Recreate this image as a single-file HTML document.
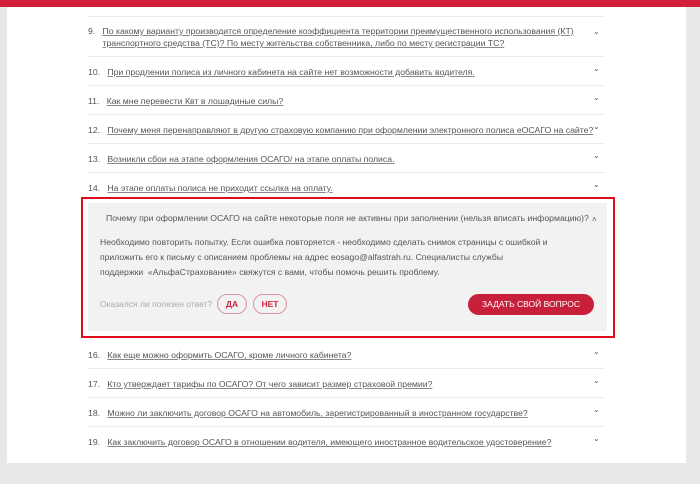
<!DOCTYPE html><html><head><meta charset="utf-8"><style>
body{margin:0;width:700px;height:484px;background:#e8e8e8;font-family:"Liberation Sans","DejaVu Sans",sans-serif;position:relative;overflow:hidden}
.bar{position:absolute;left:0;top:0;width:700px;height:7px;background:#d31e3a}
.white{position:absolute;left:7px;top:7px;width:679px;height:456px;background:#fff}
.ln{position:absolute;left:88px;width:517px;height:1px;background:#ececec}
.q{position:absolute;left:88px;font-size:8.7px;color:#555;line-height:12px;width:500px;white-space:nowrap}
.q u{color:#555;text-decoration-color:#888}
.ch{position:absolute;left:593px;font-size:8px;color:#555}
.box{position:absolute;left:81px;top:197px;width:530px;height:137px;border:2px solid #e10d1a}
.in{position:absolute;left:5px;top:4px;width:519px;height:128px;background:#f2f2f2}
.btn{position:absolute;border:1px solid #d9969e;border-radius:12px;color:#c8283f;font-size:8.5px;font-weight:bold;text-align:center;line-height:18px}
</style></head><body>
<div class="bar"></div><div class="white"></div>
<div class="ln" style="top:16px"></div>
<div class="q" style="top:25px">9.&nbsp;&nbsp; <u>По какому варианту производится определение коэффициента территории преимущественного использования (КТ)</u><br>&nbsp;&nbsp;&nbsp;&nbsp;&nbsp;&nbsp;<u>транспортного средства (ТС)? По месту жительства собственника, либо по месту регистрации ТС?</u></div><div class="ch" style="top:27px">⌄</div>
<div class="ln" style="top:56px"></div>
<div class="q" style="top:66px">10.&nbsp;&nbsp; <u>При продлении полиса из личного кабинета на сайте нет возможности добавить водителя.</u></div><div class="ch" style="top:64px">⌄</div>
<div class="ln" style="top:85px"></div>
<div class="q" style="top:95px">11.&nbsp;&nbsp; <u>Как мне перевести Квт в лошадиные силы?</u></div><div class="ch" style="top:93px">⌄</div>
<div class="ln" style="top:114px"></div>
<div class="q" style="top:124px">12.&nbsp;&nbsp; <u>Почему меня перенаправляют в другую страховую компанию при оформлении электронного полиса еОСАГО на сайте?</u></div><div class="ch" style="top:122px">⌄</div>
<div class="ln" style="top:143px"></div>
<div class="q" style="top:153px">13.&nbsp;&nbsp; <u>Возникли сбои на этапе оформления ОСАГО/ на этапе оплаты полиса.</u></div><div class="ch" style="top:151px">⌄</div>
<div class="ln" style="top:172px"></div>
<div class="q" style="top:182px">14.&nbsp;&nbsp; <u>На этапе оплаты полиса не приходит ссылка на оплату.</u></div><div class="ch" style="top:180px">⌄</div>
<div class="box"><div class="in">
<div style="position:absolute;left:18px;top:10px;font-size:8.7px;color:#555;white-space:nowrap">Почему при оформлении ОСАГО на сайте некоторые поля не активны при заполнении (нельзя вписать информацию)?</div>
<div style="position:absolute;left:504px;top:12px;font-size:8px;color:#555">˄</div>
<div style="position:absolute;left:12px;top:32px;width:470px;font-size:8.6px;color:#555;line-height:15px">Необходимо повторить попытку. Если ошибка повторяется - необходимо сделать снимок страницы с ошибкой и<br>приложить его к письму с описанием проблемы на адрес eosago@alfastrah.ru. Специалисты службы<br>поддержки &nbsp;«АльфаСтрахование» свяжутся с вами, чтобы помочь решить проблему.</div>
<div style="position:absolute;left:12px;top:96px;font-size:8.5px;color:#aaa">Оказался ли полезен ответ?</div>
<div class="btn" style="left:129px;top:91px;width:28px">ДА</div>
<div class="btn" style="left:165px;top:91px;width:32px">НЕТ</div>
<div class="btn" style="left:380px;top:91px;width:124px;height:19px;line-height:19px;background:#c8203b;border-color:#c8203b;color:#fff;font-weight:normal">ЗАДАТЬ СВОЙ ВОПРОС</div>
</div></div>
<div class="q" style="top:349px">16.&nbsp;&nbsp; <u>Как еще можно оформить ОСАГО, кроме личного кабинета?</u></div><div class="ch" style="top:347px">⌄</div>
<div class="ln" style="top:368px"></div>
<div class="q" style="top:378px">17.&nbsp;&nbsp; <u>Кто утверждает тарифы по ОСАГО? От чего зависит размер страховой премии?</u></div><div class="ch" style="top:376px">⌄</div>
<div class="ln" style="top:397px"></div>
<div class="q" style="top:407px">18.&nbsp;&nbsp; <u>Можно ли заключить договор ОСАГО на автомобиль, зарегистрированный в иностранном государстве?</u></div><div class="ch" style="top:405px">⌄</div>
<div class="ln" style="top:426px"></div>
<div class="q" style="top:436px">19.&nbsp;&nbsp; <u>Как заключить договор ОСАГО в отношении водителя, имеющего иностранное водительское удостоверение?</u></div><div class="ch" style="top:434px">⌄</div>
</body></html>
